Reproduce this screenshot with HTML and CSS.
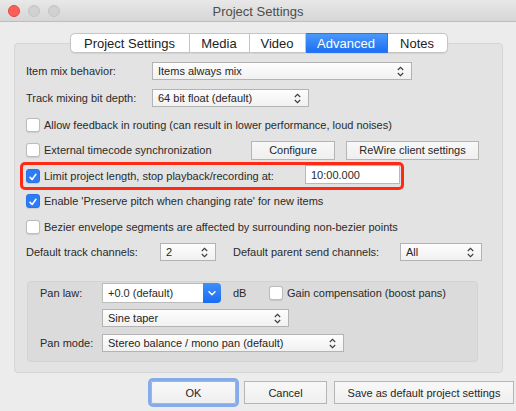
FILE: index.html
```html
<!DOCTYPE html>
<html>
<head>
<meta charset="utf-8">
<link rel="stylesheet" href="styles.css">
</head>
<body>
<div class="win">
  <div class="titlebar">
    <div class="lights"><span class="light red"></span><span class="light"></span><span class="light"></span></div>
    <div class="title">Project Settings</div>
    <div></div>
  </div>
  <div class="content">
    <div class="tabs">
      <div class="tab t1">Project Settings</div>
      <div class="tab t2">Media</div>
      <div class="tab t3">Video</div>
      <div class="tab t4 sel">Advanced</div>
      <div class="tab t5">Notes</div>
    </div>
    <div class="panel">
      <div class="row r1">
        <span class="lbl w126">Item mix behavior:</span>
        <div class="select" style="width:260px"><span>Items always mix</span><svg class="ud" width="7" height="11" viewBox="0 0 7 11"><path d="M0.8 4 L3.5 1.3 L6.2 4 M0.8 7 L3.5 9.7 L6.2 7" stroke="#3a3a3a" fill="none" stroke-width="1.1"/></svg></div>
      </div>
      <div class="row r2">
        <span class="lbl w126">Track mixing bit depth:</span>
        <div class="select" style="width:157px"><span>64 bit float (default)</span><svg class="ud" width="7" height="11" viewBox="0 0 7 11"><path d="M0.8 4 L3.5 1.3 L6.2 4 M0.8 7 L3.5 9.7 L6.2 7" stroke="#3a3a3a" fill="none" stroke-width="1.1"/></svg></div>
      </div>
      <div class="row r3">
        <span class="cb"></span><span class="cbl">Allow feedback in routing (can result in lower performance, loud noises)</span>
      </div>
      <div class="row r4">
        <span class="cb"></span><span class="cbl ext">External timecode synchronization</span>
        <div class="btn cfg">Configure</div>
        <div class="btn rw">ReWire client settings</div>
      </div>
      <div class="hl">
        <span class="cb on"><svg width="14" height="14" viewBox="0 0 14 14"><path d="M3.6 7.4 L6 9.9 L10.4 3.8" stroke="#fff" stroke-width="1.8" fill="none" stroke-linecap="round" stroke-linejoin="round"/></svg></span>
        <span class="cbl lim">Limit project length, stop playback/recording at:</span>
        <div class="field">10:00.000</div>
      </div>
      <div class="row r6">
        <span class="cb on"><svg width="14" height="14" viewBox="0 0 14 14"><path d="M3.6 7.4 L6 9.9 L10.4 3.8" stroke="#fff" stroke-width="1.8" fill="none" stroke-linecap="round" stroke-linejoin="round"/></svg></span>
        <span class="cbl">Enable 'Preserve pitch when changing rate' for new items</span>
      </div>
      <div class="row r7">
        <span class="cb"></span><span class="cbl">Bezier envelope segments are affected by surrounding non-bezier points</span>
      </div>
      <div class="row r8">
        <span class="lbl w134">Default track channels:</span>
        <div class="select" style="width:56px"><span>2</span><svg class="ud" width="7" height="11" viewBox="0 0 7 11"><path d="M0.8 4 L3.5 1.3 L6.2 4 M0.8 7 L3.5 9.7 L6.2 7" stroke="#3a3a3a" fill="none" stroke-width="1.1"/></svg></div>
        <span class="lbl w167 dp">Default parent send channels:</span>
        <div class="select" style="width:82px"><span>All</span><svg class="ud" width="7" height="11" viewBox="0 0 7 11"><path d="M0.8 4 L3.5 1.3 L6.2 4 M0.8 7 L3.5 9.7 L6.2 7" stroke="#3a3a3a" fill="none" stroke-width="1.1"/></svg></div>
      </div>
      <div class="group">
        <div class="grow g1">
          <span class="lbl w62">Pan law:</span>
          <div class="combo">
            <div class="combo-text">+0.0 (default)</div>
            <div class="combo-btn"><svg width="8" height="5" viewBox="0 0 8 5"><path d="M1 0.8 L4 3.8 L7 0.8" stroke="#fff" stroke-width="1.5" fill="none" stroke-linecap="round" stroke-linejoin="round"/></svg></div>
          </div>
          <span class="db">dB</span>
          <span class="cb gc"></span><span class="cbl">Gain compensation (boost pans)</span>
        </div>
        <div class="grow g2">
          <span class="lbl w62"></span>
          <div class="select" style="width:187px"><span>Sine taper</span><svg class="ud" width="7" height="11" viewBox="0 0 7 11"><path d="M0.8 4 L3.5 1.3 L6.2 4 M0.8 7 L3.5 9.7 L6.2 7" stroke="#3a3a3a" fill="none" stroke-width="1.1"/></svg></div>
        </div>
        <div class="grow g3">
          <span class="lbl w62">Pan mode:</span>
          <div class="select" style="width:242px"><span>Stereo balance / mono pan (default)</span><svg class="ud" width="7" height="11" viewBox="0 0 7 11"><path d="M0.8 4 L3.5 1.3 L6.2 4 M0.8 7 L3.5 9.7 L6.2 7" stroke="#3a3a3a" fill="none" stroke-width="1.1"/></svg></div>
        </div>
      </div>
    </div>
    <div class="footer">
      <div class="btn fbtn ok">OK</div>
      <div class="btn fbtn cancel">Cancel</div>
      <div class="btn fbtn save">Save as default project settings</div>
    </div>
  </div>
</div>
</body>
</html>
```
FILE: styles.css
```css
* { box-sizing: border-box; }
html, body { margin: 0; padding: 0; }
body {
  width: 516px; height: 411px; overflow: hidden;
  font-family: "Liberation Sans", Arial, sans-serif;
  font-size: 11px; color: #2a2a2a;
  background: #ececec;
}
.win { width: 516px; height: 411px; background: #ececec; overflow: hidden; }
.titlebar {
  height: 22px;
  display: grid; grid-template-columns: 1fr auto 1fr; align-items: center;
  background: linear-gradient(#e8e8e8, #d6d6d6);
  border-bottom: 1px solid #bdbdbd;
}
.lights { display: flex; gap: 8px; padding-left: 8px; padding-top: 1px; }
.light { width: 12px; height: 12px; border-radius: 50%; background: #d1d1d1; border: 1px solid #c3c3c3; }
.light.red { background: #fc5f57; border-color: #e2463f; }
.title { font-size: 13px; color: #4d4d4d; padding-top: 1px; }
.content { padding-top: 11px; }
.tabs {
  position: relative; z-index: 1;
  display: flex; justify-content: center;
  height: 20px; margin-left: 1px;
}
.tab {
  height: 20px; font-size: 13px; color: #222;
  display: flex; align-items: center; justify-content: center;
  background: #fff; border: 1px solid #c5c5c5; border-left: none;
  box-shadow: 0 0.5px 1px rgba(0,0,0,0.08);
}
.t1 { width: 120px; border-left: 1px solid #c5c5c5; border-radius: 5px 0 0 5px; }
.t2 { width: 60px; }
.t3 { width: 56px; }
.t4 { width: 82px; }
.t5 { width: 60px; border-radius: 0 5px 5px 0; }
.tab.sel { background: linear-gradient(#4b98fb, #1d6ff4); color: #fff; border-color: #2a76f0; }
.panel {
  margin: -10px 13px 0 14px; height: 330px;
  border: 1px solid #d5d5d5; border-radius: 4px;
  background: #e3e3e3;
  padding-top: 18px;
}
.row { display: flex; align-items: center; padding-left: 11px; }
.lbl { flex: none; }
.w126 { width: 126px; }
.w134 { width: 134px; }
.w167 { width: 167px; }
.w62 { width: 62px; }
.r1 { height: 18px; }
.r2 { height: 18px; margin-top: 9px; }
.r3 { height: 14px; margin-top: 11px; }
.r4 { height: 20px; margin-top: 8px; }
.r6 { height: 14px; margin-top: 4px; }
.r7 { height: 14px; margin-top: 12px; }
.r8 { height: 18px; margin-top: 9px; }
.select {
  height: 18px; flex: none;
  display: flex; align-items: center; justify-content: space-between;
  padding: 0 7px 0 5px;
  background: linear-gradient(#fdfdfd, #f1f1f1);
  border: 1px solid #b3b3b3;
  color: #262626;
}
.ud { flex: none; }
.cb {
  width: 14px; height: 14px; flex: none;
  background: #fff; border: 1px solid #bcbcbc; border-radius: 3px;
  box-shadow: 0 0.5px 1px rgba(0,0,0,0.1);
  display: flex;
}
.cb.on { background: #2d7cf6; border-color: #2a72e8; }
.cbl { margin-left: 4px; white-space: nowrap; }
.ext { width: 207px; }
.btn {
  display: flex; align-items: center; justify-content: center;
  background: linear-gradient(#f8f8f8, #efefef);
  border: 1px solid #b5b5b5;
  color: #262626; white-space: nowrap;
}
.cfg { width: 84px; height: 19px; }
.rw { width: 133px; height: 19px; margin-left: 11px; }
.hl {
  display: flex; align-items: center;
  margin: 2px 0 0 5px; width: 384px; height: 28px;
  border: 3px solid #ff2a14; border-radius: 5px;
  padding-left: 3px;
}
.lim { width: 261px; }
.field {
  width: 95px; height: 19px; margin-top: -3px;
  background: #fff; border: 1px solid #b8b8b8;
  display: flex; align-items: center; padding-left: 5px;
}
.dp { margin-left: 17px; }
.group {
  margin: 20px 24px 0 12px; height: 81px;
  background: #dbdbdb; border: 1px solid #d3d3d3; border-radius: 4px;
  padding: 1px 0 0 12px;
}
.grow { display: flex; align-items: center; }
.g1 { height: 20px; }
.g2 { height: 18px; margin-top: 6px; }
.g3 { height: 18px; margin-top: 7px; }
.combo { display: flex; height: 20px; width: 119px; flex: none; }
.combo-text {
  flex: 1; background: #fff; border: 1px solid #bcbcbc; border-right: none;
  display: flex; align-items: center; padding-left: 5px;
}
.combo-btn {
  width: 18px; background: linear-gradient(#3f8ffa, #1a6cf3);
  border-radius: 0 4px 4px 0;
  display: flex; align-items: center; justify-content: center;
}
.db { margin-left: 12px; width: 36px; }
.gc { margin-left: 0; }
.footer {
  display: flex; justify-content: flex-end; gap: 8px;
  margin-top: 8px; padding-right: 2px;
}
.fbtn { height: 23px; }
.ok { width: 85px; box-shadow: 0 0 0 3px #86abe9; border-color: #9fb5da; border-radius: 2px; }
.cancel { width: 83px; }
.save { width: 180px; margin-left: -1px; }
```
